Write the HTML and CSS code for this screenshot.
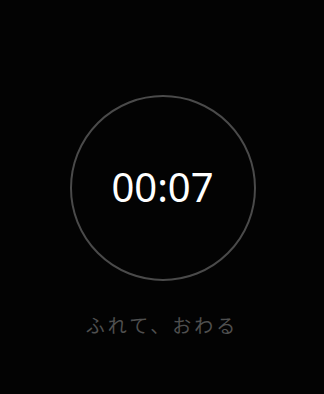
FILE: index.html
```html
<!DOCTYPE html>
<html lang="ja">

<head>
    <meta charset="UTF-8">
    <meta name="viewport" content="width=device-width, initial-scale=1.0">
    <title>タイマー</title>
    <link rel="stylesheet" href="styles.css">
</head>

<body>
    <div class="timer">
        <div class="ring">
            <span class="time">00:07</span>
        </div>
        <p class="hint">ふれて、おわる</p>
    </div>
</body>

</html>
```

FILE: styles.css
```css
* {
    margin: 0;
    padding: 0;
    box-sizing: border-box;
}

body {
    height: 100vh;
    background-color: #030303;
    font-family: "Noto Sans CJK JP", "Noto Sans", sans-serif;
}

.timer {
    display: flex;
    flex-direction: column;
    align-items: center;
    padding-top: 95px;
}

.ring {
    width: 186px;
    height: 186px;
    margin-left: 1px;
    border: 2px solid #4a4a4a;
    border-radius: 50%;
    display: flex;
    align-items: center;
    justify-content: center;
}

.time {
    color: #fff;
    font-family: "Noto Sans", "Open Sans", sans-serif;
    font-size: 40px;
    font-weight: 400;
    line-height: 1;
    margin-top: -2px;
}

.hint {
    margin-top: 32px;
    color: #4f4f4f;
    font-size: 19px;
    letter-spacing: 3px;
    line-height: 1.3;
}
```
